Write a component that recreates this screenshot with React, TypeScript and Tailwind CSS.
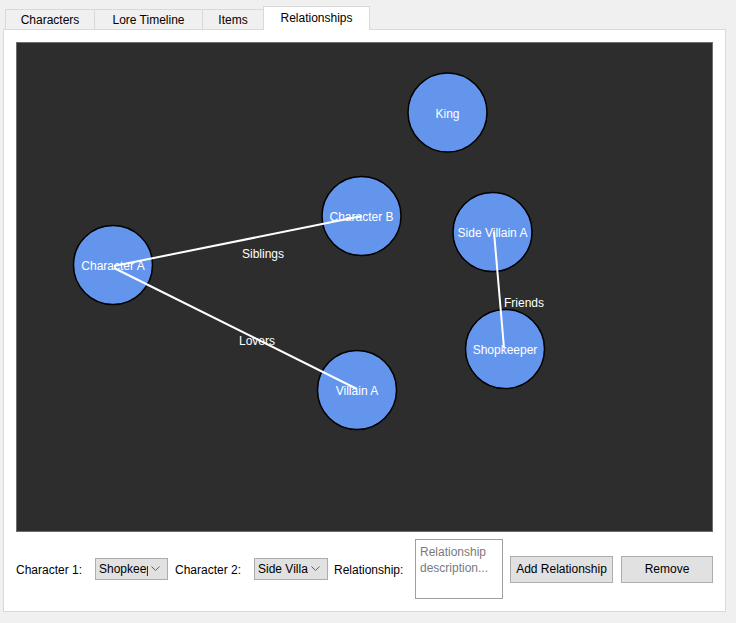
import React from "react";

const nodes = [
  { name: "King", x: 447.5, y: 112.5 },
  { name: "Character B", x: 361.5, y: 216 },
  { name: "Character A", x: 113, y: 265 },
  { name: "Side Villain A", x: 492.5, y: 232 },
  { name: "Shopkeeper", x: 505, y: 349 },
  { name: "Villain A", x: 357, y: 390 },
];

const edges = [
  { x1: 114, y1: 266, x2: 362, y2: 216, label: "Siblings", lx: 263, ly: 254 },
  { x1: 114, y1: 268, x2: 357, y2: 389, label: "Lovers", lx: 257, ly: 341 },
  { x1: 494, y1: 232, x2: 504, y2: 348, label: "Friends", lx: 524, ly: 303 },
];

const font = { fontFamily: '"Liberation Sans", Arial, sans-serif' };

function Combo({ text }: { text: string }) {
  return (
    <div className="flex h-[22px] items-center border border-[#adadad] bg-[#e1e1e1] pl-[3px] pr-[7px]">
      <span className="flex-1 overflow-hidden whitespace-nowrap text-[12px] text-black">{text}</span>
      <svg width="9" height="6" viewBox="0 0 9 6" className="ml-[3px] shrink-0">
        <path d="M0.5 0.5 L4.5 4.5 L8.5 0.5" fill="none" stroke="#606060" strokeWidth="1" />
      </svg>
    </div>
  );
}

export default function App() {
  return (
    <div className="h-[623px] w-[736px] bg-[#f0f0f0] text-[12px] text-black" style={font}>
      <div className="flex h-[29px] items-end pl-[5px]">
        <div className="flex h-[20px] w-[90px] items-center justify-center border border-b-0 border-[#d9d9d9] bg-[#f0f0f0]">Characters</div>
        <div className="flex h-[20px] w-[108px] items-center justify-center border border-b-0 border-l-0 border-[#d9d9d9] bg-[#f0f0f0]">Lore Timeline</div>
        <div className="flex h-[20px] w-[61px] items-center justify-center border border-b-0 border-l-0 border-[#d9d9d9] bg-[#f0f0f0]">Items</div>
        <div className="relative z-10 -mb-px ml-[-1px] flex h-[24px] w-[107px] items-center justify-center border border-b-0 border-[#d9d9d9] bg-white pb-[2px]">Relationships</div>
      </div>
      <div className="ml-[3px] flex h-[583px] w-[723px] flex-col border border-[#d9d9d9] bg-white pl-[12px] pt-[12px]">
        <div className="relative h-[490px] w-[697px] border border-[#6e6e6e] bg-[#2d2d2d]">
          <svg width="695" height="488" viewBox="17 43 695 488" className="absolute left-0 top-0">
            {nodes.map((n) => (
              <circle key={n.name} cx={n.x} cy={n.y} r={39.5} fill="#6495ed" stroke="#000" strokeWidth={1.5} />
            ))}
            {edges.map((e) => (
              <line key={e.label} x1={e.x1} y1={e.y1} x2={e.x2} y2={e.y2} stroke="#fff" strokeWidth={2} />
            ))}
            {nodes.map((n) => (
              <text key={n.name} x={n.x} y={n.y + 5} textAnchor="middle" fill="#fff" fontSize="12" style={font}>
                {n.name}
              </text>
            ))}
            {edges.map((e) => (
              <text key={e.label} x={e.lx} y={e.ly + 4} textAnchor="middle" fill="#fff" fontSize="12" style={font}>
                {e.label}
              </text>
            ))}
          </svg>
        </div>
        <div className="mt-[7px] flex h-[60px] items-center">
          <span className="w-[79px] whitespace-nowrap pt-[2px]">Character 1:</span>
          <div className="w-[73px]"><Combo text="Shopkeeper" /></div>
          <span className="ml-[7px] w-[79px] whitespace-nowrap pt-[2px]">Character 2:</span>
          <div className="w-[74px]"><Combo text="Side Villain A" /></div>
          <span className="ml-[6px] w-[81px] whitespace-nowrap pt-[2px]">Relationship:</span>
          <div className="h-[60px] w-[88px] border border-[#a0a0a0] bg-white px-[4px] pt-[4px] text-[12px] leading-[16px] text-[#7a7a7a]">
            Relationship description...
          </div>
          <button className="ml-[7px] h-[27px] w-[103px] border border-[#adadad] bg-[#e1e1e1] text-[12px] text-black">Add Relationship</button>
          <button className="ml-[8px] h-[27px] w-[92px] border border-[#adadad] bg-[#e1e1e1] text-[12px] text-black">Remove</button>
        </div>
      </div>
    </div>
  );
}
